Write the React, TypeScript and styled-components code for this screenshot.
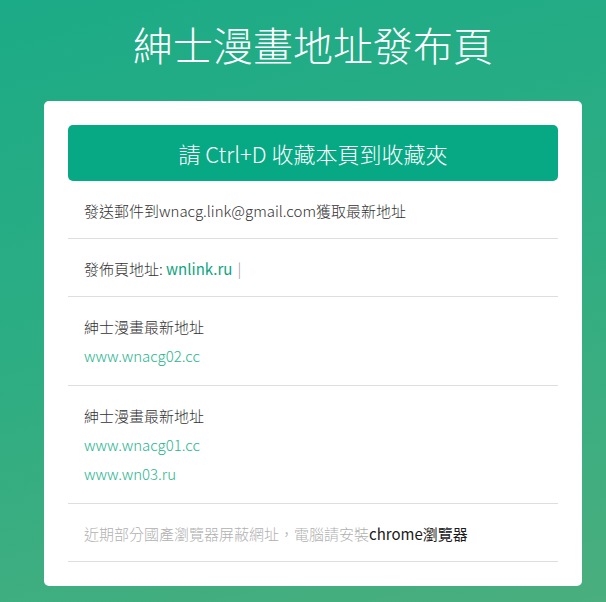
import React, { FC } from 'react';
import styled, { createGlobalStyle } from 'styled-components';

const GlobalStyle = createGlobalStyle`
  html,
  body {
    margin: 0;
    padding: 0;
  }

  body {
    background: linear-gradient(165deg, #1bab86 0%, #2cad83 45%, #4aae7e 100%);
    font-family: "Noto Sans CJK TC", "Noto Sans", sans-serif;
    min-height: 602px;
    overflow: hidden;
  }
`;

const Page = styled.main`
  display: flex;
  flex-direction: column;
  margin-left: 44px;
  width: 538px;
`;

const Title = styled.h1`
  color: #fff;
  font-size: 40px;
  font-weight: 300;
  line-height: 56px;
  margin: 0;
  padding: 16px 0 29px;
  text-align: center;
`;

const Card = styled.section`
  background: #fff;
  border-radius: 5px;
  display: flex;
  flex-direction: column;
  padding: 24px 24px 24px;
`;

const SaveButton = styled.div`
  background: #06a984;
  border-radius: 5px;
  color: #fff;
  font-size: 22px;
  font-weight: 300;
  height: 56px;
  line-height: 56px;
  text-align: center;
`;

const Row = styled.div<{ $multi?: boolean }>`
  border-bottom: 1px solid #dedede;
  color: #333;
  display: flex;
  flex-direction: column;
  font-size: 15px;
  font-weight: 300;
  line-height: 29px;
  padding: 15px 16px ${({ $multi }) => ($multi ? '15px' : '13px')};
`;

const Link = styled.a<{ $strong?: boolean }>`
  color: ${({ $strong }) => ($strong ? '#0ea47f' : '#2ab58e')};
  font-weight: ${({ $strong }) => ($strong ? 400 : 300)};
  text-decoration: none;
`;

const Cursor = styled.span`
  color: #999;
  margin-left: 5px;
`;

const Muted = styled.span`
  color: #b0b0b0;
`;

const Dark = styled.span`
  color: #1a1a1a;
  font-weight: 400;
`;

const mirrors = [
  { label: '紳士漫畫最新地址', links: ['www.wnacg02.cc'] },
  { label: '紳士漫畫最新地址', links: ['www.wnacg01.cc', 'www.wn03.ru'] },
];

const App: FC = () => (
  <>
    <GlobalStyle />
    <Page>
      <Title>紳士漫畫地址發布頁</Title>

      <Card>
        <SaveButton>請 Ctrl+D 收藏本頁到收藏夾</SaveButton>

        <Row>
          <span>發送郵件到wnacg.link@gmail.com獲取最新地址</span>
        </Row>

        <Row>
          <span>
            發佈頁地址: <Link $strong href="#">wnlink.ru</Link>
            <Cursor>|</Cursor>
          </span>
        </Row>

        {mirrors.map((m, i) => (
          <Row key={i} $multi>
            <span>{m.label}</span>
            {m.links.map((l) => (
              <Link key={l} href="#">
                {l}
              </Link>
            ))}
          </Row>
        ))}

        <Row>
          <span>
            <Muted>近期部分國產瀏覽器屏蔽網址，電腦請安裝</Muted>
            <Dark>chrome瀏覽器</Dark>
          </span>
        </Row>
      </Card>
    </Page>
  </>
);

export default App;
